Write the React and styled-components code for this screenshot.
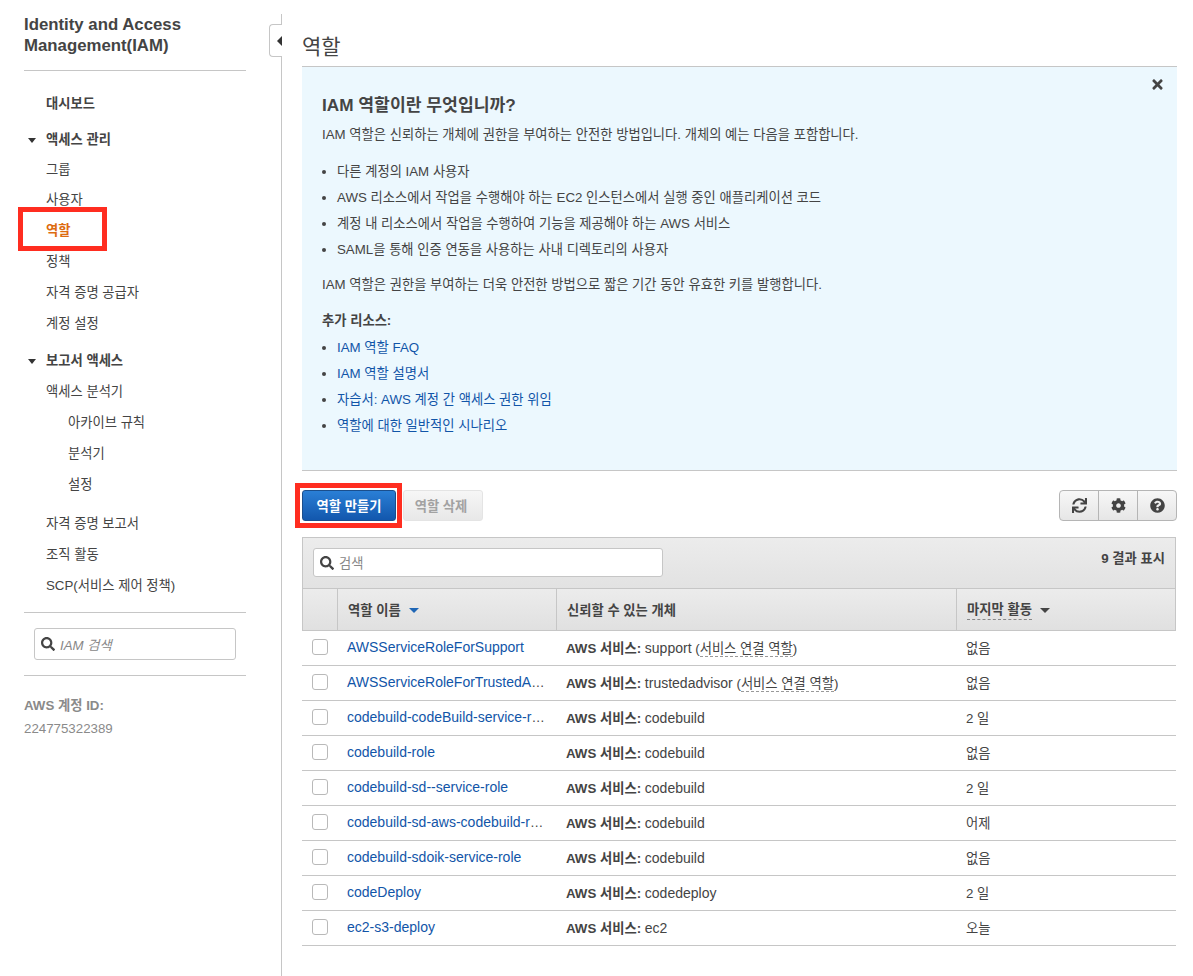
import React from 'react'
import styled, { createGlobalStyle } from 'styled-components'
import { FaSync, FaCog, FaQuestionCircle, FaTimes, FaSearch } from 'react-icons/fa'

const GlobalStyle = createGlobalStyle`
    html, body {
        margin: 0;
        padding: 0;
        background: #fff;
    }
    body {
        font-family: "Liberation Sans", "Noto Sans CJK KR", sans-serif;
        font-size: 13.3px;
        color: #444;
    }
    * {
        box-sizing: border-box;
    }
`

const Page = styled.div`
    display: flex;
    width: 1193px;
    height: 976px;
    overflow: hidden;
`

const Sidebar = styled.aside`
    position: relative;
    flex: 0 0 282px;
    margin-top: 14px;
    padding: 0 35px 0 24px;
    border-right: 1px solid #c6c6c6;
`

const CollapseTab = styled.div`
    position: absolute;
    top: 10px;
    right: -1px;
    width: 13px;
    height: 33px;
    display: flex;
    align-items: center;
    justify-content: flex-end;
    background: #fff;
    border: 1px solid #c6c6c6;
    border-right: none;
    border-radius: 4px 0 0 4px;

    &::after {
        content: '';
        border-style: solid;
        border-width: 5px 5px 5px 0;
        border-color: transparent #333 transparent transparent;
    }
`

const ServiceTitle = styled.h2`
    margin: 0;
    padding-bottom: 14px;
    font-size: 16.8px;
    line-height: 21px;
    font-weight: bold;
    color: #444;
    border-bottom: 1px solid #c6c6c6;
`

const Nav = styled.nav`
    display: flex;
    flex-direction: column;
    padding: 16px 0 12px;
`

const NavItem = styled.div`
    position: relative;
    height: ${p => p.$height || 31}px;
    margin-top: ${p => p.$gap || 0}px;
    display: flex;
    align-items: center;
    padding-left: ${p => (p.$nested ? 44 : 22)}px;
    font-weight: ${p => (p.$bold || p.$active ? 'bold' : 'normal')};
    color: ${p => (p.$active ? '#dd6b10' : '#444')};
`

const Caret = styled.span`
    position: absolute;
    left: 4px;
    top: 50%;
    margin-top: -1px;
    border-style: solid;
    border-width: 5px 4.5px 0 4.5px;
    border-color: #333 transparent transparent transparent;
`

const Annotation = styled.span`
    position: absolute;
    pointer-events: none;
    border: 5px solid #ff2d20;
    left: ${p => p.$left}px;
    top: ${p => p.$top}px;
    width: ${p => p.$width}px;
    height: ${p => p.$height}px;
`

const Divider = styled.div`
    height: 1px;
    background: #c6c6c6;
`

const SearchBox = styled.div`
    display: flex;
    align-items: center;
    gap: 5px;
    height: ${p => p.$height}px;
    width: ${p => p.$width};
    padding: 0 6px;
    background: #fff;
    border: 1px solid #c6c6c6;
    border-radius: 3px;
    font-style: ${p => (p.$italic ? 'italic' : 'normal')};
    color: #888;

    svg {
        flex: none;
        color: #444;
        font-size: 14px;
    }
`

const SideSearchWrap = styled.div`
    padding: 15px 10px;
`

const AccountBlock = styled.div`
    padding-top: 18px;
    line-height: 23px;
    color: #8a8a8a;
`

const AccountLabel = styled.div`
    font-weight: bold;
`

const Main = styled.main`
    flex: 0 0 895px;
    padding: 0 0 0 20px;
`

const PageTitle = styled.h1`
    margin: 0;
    height: 67px;
    padding-top: 34px;
    font-size: 21px;
    line-height: 26px;
    font-weight: normal;
    color: #444;
    border-bottom: 1px solid #c6c6c6;
`

const InfoPanel = styled.section`
    position: relative;
    height: 404px;
    padding: 26px 20px 0;
    background: #ecf8fe;
    border-bottom: 1px solid #c6c6c6;
`

const CloseIcon = styled(FaTimes)`
    position: absolute;
    top: 10px;
    right: 12px;
    font-size: 15px;
    color: #444;
`

const InfoTitle = styled.h3`
    margin: 0 0 8px;
    font-size: 17.2px;
    line-height: 24px;
    font-weight: bold;
    color: #444;
`

const InfoText = styled.p`
    margin: ${p => p.$top || 0}px 0 0;
    line-height: 20px;
    font-weight: ${p => (p.$bold ? 'bold' : 'normal')};
`

const InfoList = styled.ul`
    margin: ${p => p.$top}px 0 ${p => p.$bottom}px;
    padding: 0 0 0 15px;
    list-style: disc;

    li {
        height: 26px;
        line-height: 26px;
    }

    a {
        color: #1155a8;
        text-decoration: none;
    }
`

const Toolbar = styled.div`
    display: flex;
    align-items: center;
    justify-content: space-between;
    height: 66px;
    padding-top: 3px;
`

const ButtonGroup = styled.div`
    display: flex;
    gap: 7px;
`

const AnnotatedWrap = styled.div`
    position: relative;
`

const PrimaryButton = styled.button`
    display: block;
    width: 94px;
    height: 31px;
    padding: 0;
    font: bold 13.3px "Liberation Sans", "Noto Sans CJK KR", sans-serif;
    color: #fff;
    background: linear-gradient(#2a7fd6, #1257ad);
    border: 1px solid #1a4e8c;
    border-radius: 3px;
`

const DisabledButton = styled.button`
    width: 80px;
    height: 31px;
    padding: 0 4px 0 0;
    font: bold 13.3px "Liberation Sans", "Noto Sans CJK KR", sans-serif;
    color: #a2a2a2;
    background: linear-gradient(#f6f6f6, #e8e8e8);
    border: 1px solid #e4e4e4;
    border-radius: 3px;
`

const IconGroup = styled.div`
    display: flex;
    width: 118px;
    height: 31px;
    background: linear-gradient(#f7f7f7, #e6e6e6);
    border: 1px solid #b5b5b5;
    border-radius: 4px;
`

const IconButton = styled.div`
    flex: 1;
    display: flex;
    align-items: center;
    justify-content: center;
    font-size: 15px;
    color: #444;

    & + & {
        border-left: 1px solid #b5b5b5;
    }
`

const TableWrap = styled.div`
    width: 874px;
`

const TableTop = styled.div`
    display: flex;
    align-items: flex-start;
    justify-content: space-between;
    height: 51px;
    padding: 10px 10px 0;
    background: linear-gradient(#ececec, #e2e2e2);
    border: 1px solid #c6c6c6;
    border-bottom: none;
`

const ResultCount = styled.div`
    font-weight: bold;
    line-height: 22px;
`

const HeadRow = styled.div`
    display: grid;
    grid-template-columns: 34px 219px 400px 1fr;
    height: 43px;
    background: linear-gradient(#ececec, #e0e0e0);
    border: 1px solid #c6c6c6;
`

const HeadCell = styled.div`
    display: flex;
    align-items: center;
    gap: 8px;
    padding-left: 10px;
    font-weight: bold;
    color: #444;

    & + & {
        border-left: 1px solid #c6c6c6;
    }
`

const HeadCaret = styled.span`
    margin-top: 2px;
    border-style: solid;
    border-width: 5px 5px 0 5px;
    border-color: ${p => p.$color} transparent transparent transparent;
`

const Dashed = styled.span`
    padding-bottom: 1px;
    border-bottom: 1px dashed #888;
`

const BodyRow = styled.div`
    display: grid;
    grid-template-columns: 36px 218px 400px 220px;
    align-items: center;
    height: 35px;
    padding-bottom: 2px;
    border-bottom: 1px solid #c6c6c6;
`

const CheckCell = styled.div`
    display: flex;
    justify-content: center;
`

const Checkbox = styled.span`
    display: block;
    width: 16px;
    height: 16px;
    background: #fff;
    border: 1px solid #b9b9b9;
    border-radius: 3px;
`

const Cell = styled.div`
    padding-left: ${p => p.$pad || 10}px;
    padding-right: 11px;
    white-space: nowrap;
    overflow: hidden;
    text-overflow: ellipsis;
`

const RoleLink = styled.a`
    font-size: 14px;
    color: #1155a8;
    text-decoration: none;
`

const EntityName = styled.span`
    font-size: 14px;
`

const SoftLink = styled.span`
    border-bottom: 1px dashed #999;
`

const nav = [
    { label: '대시보드', bold: true },
    { label: '액세스 관리', bold: true, caret: true, gap: 5 },
    { label: '그룹', height: 29 },
    { label: '사용자' },
    { label: '역할', active: true },
    { label: '정책' },
    { label: '자격 증명 공급자' },
    { label: '계정 설정' },
    { label: '보고서 액세스', bold: true, caret: true, gap: 6 },
    { label: '액세스 분석기' },
    { label: '아카이브 규칙', nested: true },
    { label: '분석기', nested: true },
    { label: '설정', nested: true },
    { label: '자격 증명 보고서', gap: 8 },
    { label: '조직 활동' },
    { label: 'SCP(서비스 제어 정책)' },
]

const roles = [
    { name: 'AWSServiceRoleForSupport', entity: 'support', linked: true, last: '없음' },
    { name: 'AWSServiceRoleForTrustedAdvisor', entity: 'trustedadvisor', linked: true, last: '없음' },
    { name: 'codebuild-codeBuild-service-role', entity: 'codebuild', last: '2 일' },
    { name: 'codebuild-role', entity: 'codebuild', last: '없음' },
    { name: 'codebuild-sd--service-role', entity: 'codebuild', last: '2 일' },
    { name: 'codebuild-sd-aws-codebuild-role', entity: 'codebuild', last: '어제' },
    { name: 'codebuild-sdoik-service-role', entity: 'codebuild', last: '없음' },
    { name: 'codeDeploy', entity: 'codedeploy', last: '2 일' },
    { name: 'ec2-s3-deploy', entity: 'ec2', last: '오늘' },
]

export default function App()
{
    return (
        <Page>
            <GlobalStyle />
            <Sidebar>
                <CollapseTab />
                <ServiceTitle>Identity and Access Management(IAM)</ServiceTitle>
                <Nav>
                    {nav.map((item) => (
                        <NavItem
                            key={item.label}
                            $bold={item.bold}
                            $active={item.active}
                            $nested={item.nested}
                            $gap={item.gap}
                            $height={item.height}
                        >
                            {item.caret && <Caret />}
                            {item.label}
                            {item.active && <Annotation $left={-6} $top={-7} $width={89} $height={44} />}
                        </NavItem>
                    ))}
                </Nav>
                <Divider />
                <SideSearchWrap>
                    <SearchBox $height={32} $italic>
                        <FaSearch />
                        IAM 검색
                    </SearchBox>
                </SideSearchWrap>
                <Divider />
                <AccountBlock>
                    <AccountLabel>AWS 계정 ID:</AccountLabel>
                    224775322389
                </AccountBlock>
            </Sidebar>
            <Main>
                <PageTitle>역할</PageTitle>
                <InfoPanel>
                    <CloseIcon />
                    <InfoTitle>IAM 역할이란 무엇입니까?</InfoTitle>
                    <InfoText>IAM 역할은 신뢰하는 개체에 권한을 부여하는 안전한 방법입니다. 개체의 예는 다음을 포함합니다.</InfoText>
                    <InfoList $top={14} $bottom={12}>
                        <li>다른 계정의 IAM 사용자</li>
                        <li>AWS 리소스에서 작업을 수행해야 하는 EC2 인스턴스에서 실행 중인 애플리케이션 코드</li>
                        <li>계정 내 리소스에서 작업을 수행하여 기능을 제공해야 하는 AWS 서비스</li>
                        <li>SAML을 통해 인증 연동을 사용하는 사내 디렉토리의 사용자</li>
                    </InfoList>
                    <InfoText>IAM 역할은 권한을 부여하는 더욱 안전한 방법으로 짧은 기간 동안 유효한 키를 발행합니다.</InfoText>
                    <InfoText $bold $top={16}>추가 리소스:</InfoText>
                    <InfoList $top={4} $bottom={0}>
                        <li><a>IAM 역할 FAQ</a></li>
                        <li><a>IAM 역할 설명서</a></li>
                        <li><a>자습서: AWS 계정 간 액세스 권한 위임</a></li>
                        <li><a>역할에 대한 일반적인 시나리오</a></li>
                    </InfoList>
                </InfoPanel>
                <Toolbar>
                    <ButtonGroup>
                        <AnnotatedWrap>
                            <PrimaryButton>역할 만들기</PrimaryButton>
                            <Annotation $left={-7} $top={-7} $width={107} $height={45} />
                        </AnnotatedWrap>
                        <DisabledButton>역할 삭제</DisabledButton>
                    </ButtonGroup>
                    <IconGroup>
                        <IconButton><FaSync /></IconButton>
                        <IconButton><FaCog /></IconButton>
                        <IconButton><FaQuestionCircle /></IconButton>
                    </IconGroup>
                </Toolbar>
                <TableWrap>
                    <TableTop>
                        <SearchBox $height={29} $width="350px">
                            <FaSearch />
                            검색
                        </SearchBox>
                        <ResultCount>9 결과 표시</ResultCount>
                    </TableTop>
                    <HeadRow>
                        <HeadCell />
                        <HeadCell>역할 이름 <HeadCaret $color="#1f66b5" /></HeadCell>
                        <HeadCell>신뢰할 수 있는 개체</HeadCell>
                        <HeadCell><Dashed>마지막 활동</Dashed> <HeadCaret $color="#444" /></HeadCell>
                    </HeadRow>
                    {roles.map((role) => (
                        <BodyRow key={role.name}>
                            <CheckCell><Checkbox /></CheckCell>
                            <Cell $pad={9}><RoleLink>{role.name}</RoleLink></Cell>
                            <Cell>
                                <b>AWS 서비스:</b> <EntityName>{role.entity}</EntityName>
                                {role.linked && <> (<SoftLink>서비스 연결 역할</SoftLink>)</>}
                            </Cell>
                            <Cell>{role.last}</Cell>
                        </BodyRow>
                    ))}
                </TableWrap>
            </Main>
        </Page>
    )
}
